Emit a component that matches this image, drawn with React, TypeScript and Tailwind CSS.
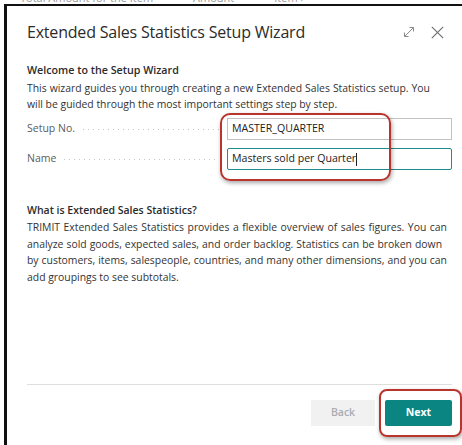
import React from "react";

const font = { fontFamily: '"Open Sans", "Noto Sans", sans-serif' };

function ExpandIcon() {
  return (
    <svg width="12" height="12" viewBox="0 0 12 12" fill="none" stroke="#8a8a8a" strokeWidth="1">
      <path d="M1.5 10.5 L10.5 1.5" />
      <path d="M6.5 1.5 H10.5 V5.5" />
      <path d="M1.5 6.5 V10.5 H5.5" />
    </svg>
  );
}

function CloseIcon() {
  return (
    <svg width="13" height="13" viewBox="0 0 13 13" fill="none" stroke="#6b6b6b" strokeWidth="1.1">
      <path d="M0.8 0.8 L12.2 12.2" />
      <path d="M12.2 0.8 L0.8 12.2" />
    </svg>
  );
}

function FieldRow({ label, value, focused }: { label: string; value: string; focused?: boolean }) {
  return (
    <div className="flex items-center h-[22px]">
      <div className="w-[200px] flex items-center pr-[8px]">
        <span className="text-[10.5px] text-[#5c5c5c] whitespace-nowrap">{label}</span>
        <span className="flex-1 ml-[8px] h-px bg-[linear-gradient(to_right,#c4c4c4_1px,transparent_1px)] bg-[length:5px_1px]" />
      </div>
      <div
        className={
          focused
            ? "flex-1 h-[22px] flex items-center px-[4px] border-[1.5px] border-[#1f8b8a] rounded-[2px] bg-white"
            : "flex-1 h-[22px] flex items-center px-[4px] border border-[#c2c2c2] bg-white"
        }
      >
        <span className="text-[10.6px] text-[#222] whitespace-nowrap">{value}</span>
        {focused && <span className="w-px h-[13px] bg-[#222]" />}
      </div>
    </div>
  );
}

// a full text line stretched to a set width
const line = "whitespace-nowrap text-justify [text-align-last:justify]";

export default function App() {
  return (
    <div className="w-[462px] h-[445px] bg-white overflow-hidden flex flex-col relative" style={font}>
      {/* page behind the dialog, mostly hidden */}
      <div className="h-[4px] overflow-hidden">
        <div className="-mt-[10px] pl-[20px] text-[11px] text-[#9a9a9a] whitespace-nowrap flex gap-[40px]">
          <span>Total Amount for the Item</span>
          <span>Amount</span>
          <span>Item ›</span>
        </div>
      </div>

      <div className="flex-1 ml-[4px] border-t-2 border-l-[3px] border-[#111] flex flex-col pl-[20px] pr-[10px]">
        {/* header */}
        <div className="flex items-center h-[20px] mt-[16px]">
          <div className="text-[16px] text-[#2b2b2b] whitespace-nowrap tracking-[-0.2px]">
            Extended Sales Statistics Setup Wizard
          </div>
          <div className="flex-1" />
          <div className="flex items-center gap-[16px] mr-[8px]">
            <ExpandIcon />
            <CloseIcon />
          </div>
        </div>

        {/* welcome */}
        <div className="mt-[20px] text-[10.7px] font-semibold text-[#2b2b2b] leading-[16px]">
          Welcome to the Setup Wizard
        </div>
        <div className="mt-[2px] text-[10.4px] text-[#333] leading-[16px]">
          <div className={`${line} w-[403px]`}>
            This wizard guides you through creating a new Extended Sales Statistics setup. You
          </div>
          <div className="whitespace-nowrap">will be guided through the most important settings step by step.</div>
        </div>

        <div className="mt-[6px] flex flex-col gap-[8px]">
          <FieldRow label="Setup No." value="MASTER_QUARTER" />
          <FieldRow label="Name" value="Masters sold per Quarter" focused />
        </div>

        {/* about */}
        <div className="mt-[32px] text-[10.5px] font-semibold text-[#2b2b2b] leading-[16px]">
          What is Extended Sales Statistics?
        </div>
        <div className="mt-[1px] text-[10.4px] text-[#333] leading-[16.5px]">
          <div className={`${line} w-[420px]`}>
            TRIMIT Extended Sales Statistics provides a flexible overview of sales figures. You can
          </div>
          <div className={`${line} w-[415px]`}>
            analyze sold goods, expected sales, and order backlog. Statistics can be broken down
          </div>
          <div className={`${line} w-[420px]`}>
            by customers, items, salespeople, countries, and many other dimensions, and you can
          </div>
          <div className="whitespace-nowrap">add groupings to see subtotals.</div>
        </div>

        <div className="flex-1" />
        <div className="h-px bg-[#dedede]" />
        <div className="mt-[15px] mb-[19px] flex justify-end gap-[10px]">
          <div className="w-[64px] h-[26px] flex items-center justify-center bg-[#f1f1f2] text-[10.5px] font-semibold text-[#a9abb0]">
            Back
          </div>
          <div className="w-[67px] h-[26px] flex items-center justify-center bg-[#0a8582] rounded-[2px] text-[10.5px] font-bold text-white">
            Next
          </div>
        </div>
      </div>

      {/* highlight marks */}
      <div className="absolute left-[220px] top-[113px] w-[171px] h-[68px] border-2 border-[#b9342d] rounded-[10px] shadow-[1px_2px_4px_rgba(0,0,0,0.35)]" />
      <div className="absolute left-[379px] top-[389px] w-[83px] h-[48px] border-2 border-[#b9342d] rounded-[8px] shadow-[1px_2px_4px_rgba(0,0,0,0.35)]" />
    </div>
  );
}
